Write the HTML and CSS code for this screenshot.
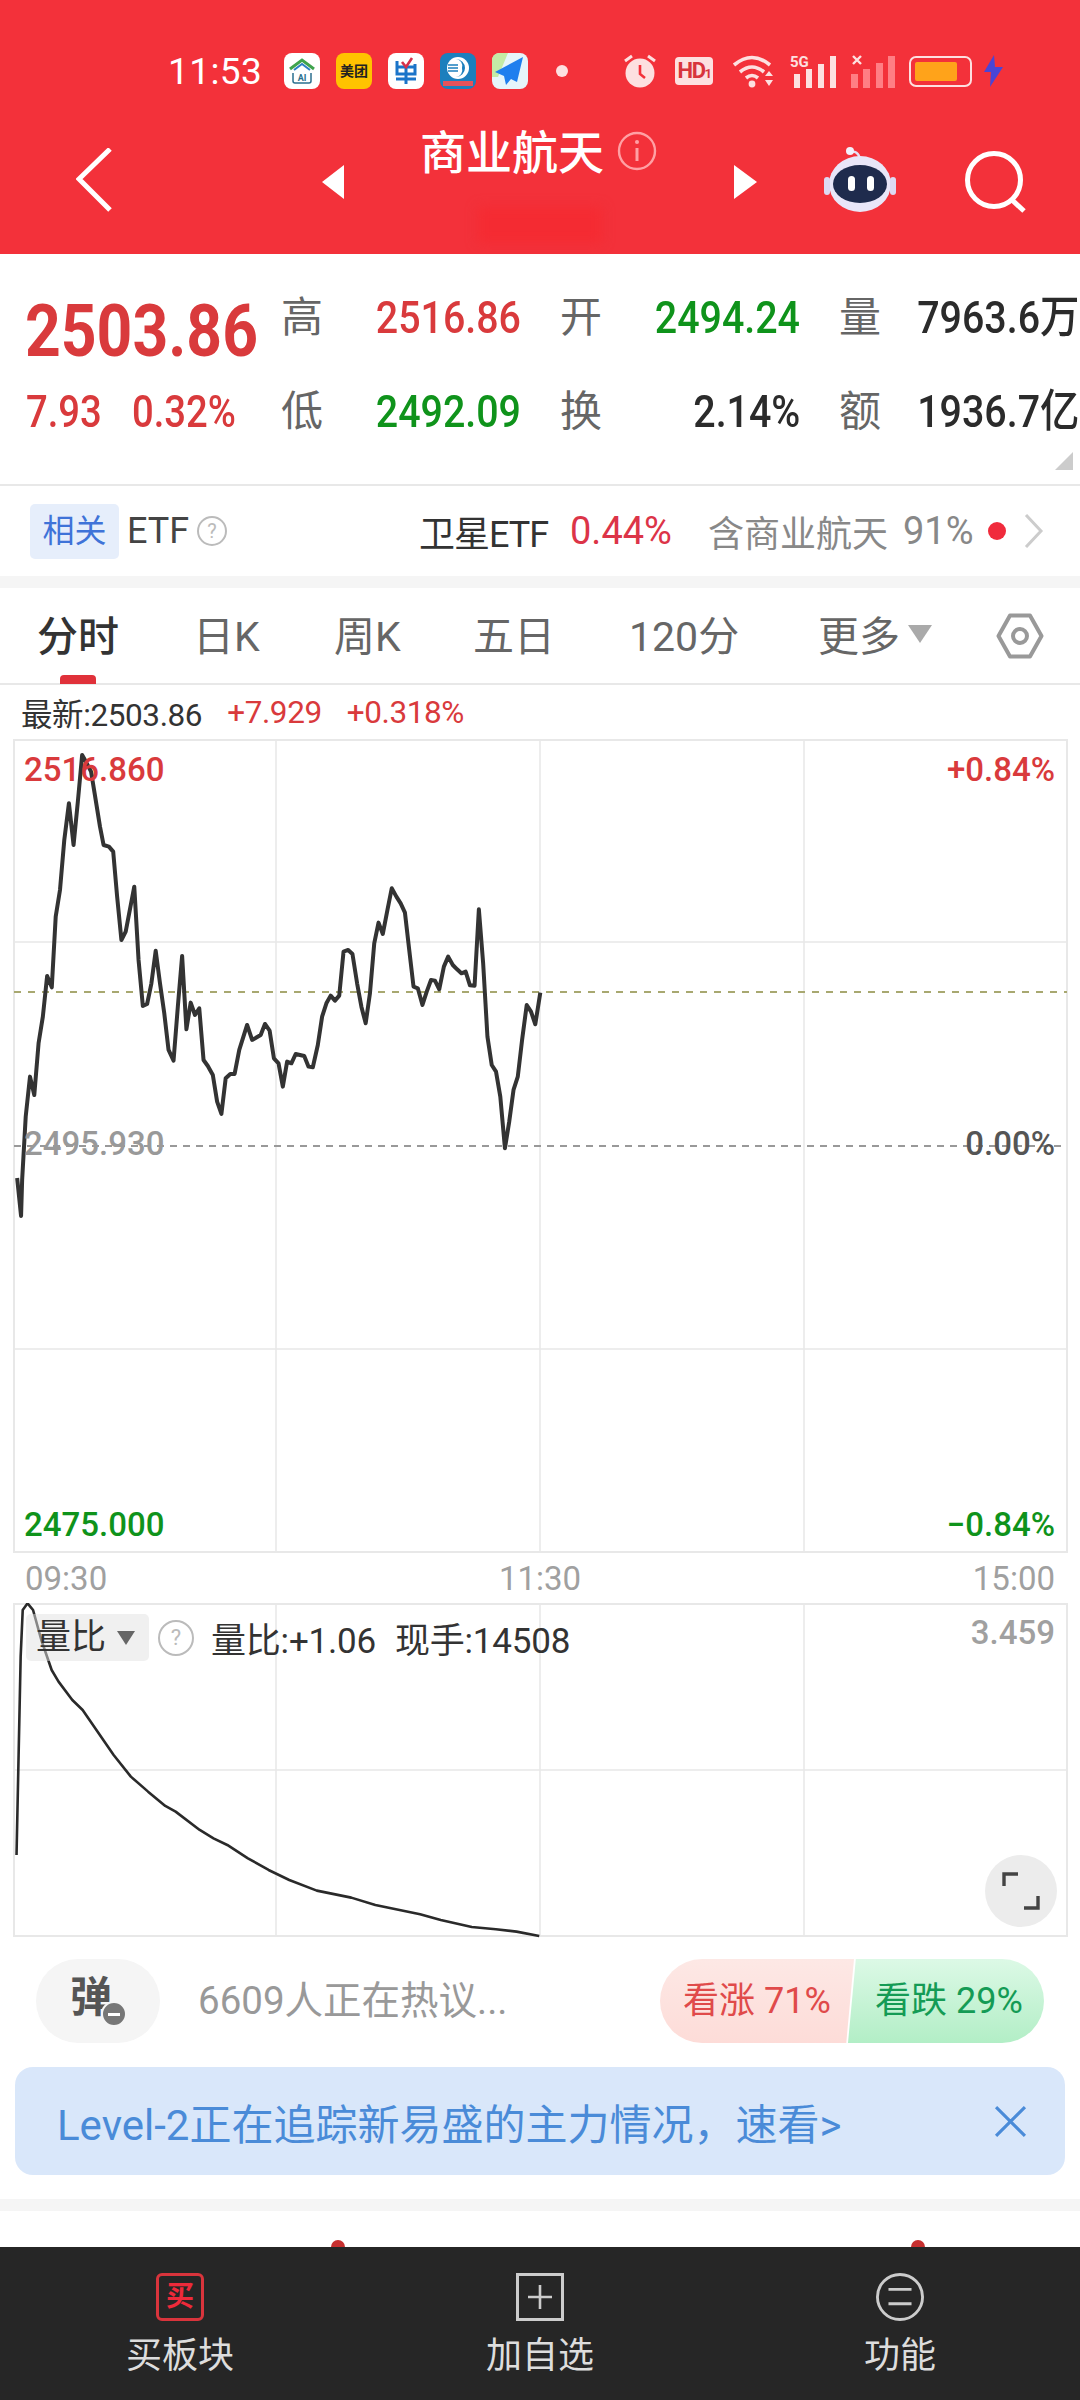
FILE: index.html
```html
<!DOCTYPE html>
<html>
<head>
    <meta charset="utf-8">
    <title>商业航天</title>
    <link rel="stylesheet" href="styles.css">
</head>
<body>
<div class="phone">

    <!-- red header -->
    <header class="top">
        <div class="status">
            <span class="time">11:53</span>
            <svg class="app first" viewBox="0 0 36 36"><rect width="36" height="36" rx="8" fill="#fff"/><path d="M6 16 18 7l12 9" fill="none" stroke="#3fa34d" stroke-width="3"/><path d="M10 17 18 11l8 6" fill="none" stroke="#2b7fc4" stroke-width="2"/><path d="M9 20v8q0 2 2 2h14q2 0 2-2v-8" fill="none" stroke="#2b6f8f" stroke-width="1.5"/><text x="18" y="28" class="app-ai">AI</text></svg>
            <span class="app meituan">美团</span>
            <svg class="app" viewBox="0 0 36 36"><rect width="36" height="36" rx="8" fill="#fff"/><path d="M9 8v13h18V11M9 14h18M18 14v17M8 26h20" fill="none" stroke="#1b74c9" stroke-width="3"/><path d="M14 9l4 5 6-9" fill="none" stroke="#d5304a" stroke-width="2.6"/></svg>
            <svg class="app" viewBox="0 0 36 36"><rect width="36" height="36" rx="8" fill="#1c7fbd"/><circle cx="18" cy="15" r="11" fill="#fff"/><path d="M16 6a9 9 0 0 1 0 18 7 7 0 0 0 6-9 7 7 0 0 0-6-9z" fill="#1c7fbd"/><path d="M8 12h10M8 15h10M8 18h10" stroke="#1c7fbd" stroke-width="1.4"/><rect x="3" y="28" width="30" height="5" fill="#e5525a"/></svg>
            <svg class="app" viewBox="0 0 36 36"><rect width="36" height="36" rx="8" fill="#e6f5fb"/><path d="M0 8q0-8 8-8h8L6 24H0z" fill="#c4eba6"/><path d="M31 4 3 19l9 4 2 9 5-6 6 3z" fill="#1f7fee"/></svg>
            <span class="dot"></span>
            <svg class="alarm" viewBox="0 0 36 36"><circle cx="18" cy="20" r="14.5" fill="#fde0e0"/><path d="M18 12v9l5 4" fill="none" stroke="#f3313a" stroke-width="2.6"/><path d="M3 8l7-5M33 8l-7-5" stroke="#fde0e0" stroke-width="3"/></svg>
            <span class="hd">HD<small>1</small></span>
            <svg class="wifi" viewBox="0 0 43 34"><path d="M2 11Q20-4 38 11M8 18q12-10 24 0M14 24q6-5 12 0" fill="none" stroke="#fde0e0" stroke-width="3.6"/><circle cx="20" cy="30" r="3.4" fill="#fde0e0"/><path d="M33 22l4-5 4 5zM33 26l4 6 4-6z" fill="#fde0e0"/></svg>
            <svg class="sig" viewBox="0 0 46 34"><text x="0" y="13" class="sig-5g">5G</text><rect x="4" y="20" width="6" height="14" fill="#fde0e0"/><rect x="16" y="15" width="6" height="19" fill="#fde0e0"/><rect x="28" y="10" width="6" height="24" fill="#fde0e0"/><rect x="40" y="2" width="6" height="32" fill="#fde0e0"/></svg>
            <svg class="sig two" viewBox="0 0 44 34"><path d="M2 2l8 8M10 2l-8 8" stroke="#fde0e0" stroke-width="2.4"/><g fill="#ff7e84"><rect y="20" width="7" height="14"/><rect x="12" y="15" width="7" height="19"/><rect x="25" y="9" width="7" height="25"/><rect x="37" y="2" width="7" height="32"/></g></svg>
            <span class="battery"><i></i></span>
            <svg class="bolt" viewBox="0 0 19 32"><path d="M10 0 0 17h7l-1 15 13-20h-8z" fill="#4a45d6"/></svg>
        </div>
        <div class="navbar">
            <svg class="back" viewBox="0 0 38 64"><path d="M34 1 3 31l31 31" fill="none" stroke="#fff" stroke-width="5"/></svg>
            <span class="tri tri-left"></span>
            <h1 class="title">商业航天</h1>
            <svg class="info" viewBox="0 0 40 40"><circle cx="20" cy="20" r="18" fill="none" stroke="#ffa0a4" stroke-width="2.4"/><path d="M20 17v13" stroke="#ffa0a4" stroke-width="3"/><circle cx="20" cy="11" r="2" fill="#ffa0a4"/></svg>
            <span class="tri tri-right"></span>
            <svg class="robot" viewBox="0 0 72 66"><path d="M26 5q8-2 10 7" fill="none" stroke="#e4e0f5" stroke-width="2.4"/><circle cx="26" cy="4" r="4" fill="#f3f0fb"/><ellipse cx="36" cy="37" rx="31" ry="28" fill="#e9e6f8"/><rect y="30" width="6" height="18" rx="3" fill="#ddd9f2"/><rect x="66" y="30" width="6" height="18" rx="3" fill="#ddd9f2"/><ellipse cx="36" cy="37" rx="27" ry="19" fill="#1f2b4d"/><rect x="24" y="29" width="7" height="15" rx="3.5" fill="#fff"/><rect x="43" y="29" width="7" height="15" rx="3.5" fill="#fff"/></svg>
            <svg class="search" viewBox="0 0 62 62"><circle cx="29" cy="29" r="26.5" fill="none" stroke="#fff" stroke-width="5"/><path d="M47 49l12 11" stroke="#fff" stroke-width="5"/></svg>
            <div class="smudge"></div>
        </div>
    </header>

    <!-- price block -->
    <section class="quote">
        <div class="q-row">
            <div class="q-main"><span class="price up">2503.86</span></div>
            <div class="pair"><span class="lbl">高</span><span class="val up">2516.86</span></div>
            <div class="pair"><span class="lbl">开</span><span class="val down">2494.24</span></div>
            <div class="pair"><span class="lbl">量</span><span class="val">7963.6万</span></div>
        </div>
        <div class="q-row">
            <div class="q-main change up"><span>7.93</span><span>0.32%</span></div>
            <div class="pair"><span class="lbl">低</span><span class="val down">2492.09</span></div>
            <div class="pair"><span class="lbl">换</span><span class="val">2.14%</span></div>
            <div class="pair"><span class="lbl">额</span><span class="val">1936.7亿</span></div>
        </div>
        <span class="corner"></span>
    </section>

    <section class="etf">
        <span class="tag">相关</span>
        <span class="etf-name">ETF</span>
        <span class="help etf-help">?</span>
        <span class="etf-fund">卫星ETF</span>
        <span class="etf-pct">0.44%</span>
        <span class="etf-has">含商业航天</span>
        <span class="etf-share">91%</span>
        <span class="etf-dot"></span>
        <svg class="etf-more" viewBox="0 0 20 34"><path d="M2 1l15 16L2 33" fill="none" stroke="#ccc" stroke-width="3"/></svg>
    </section>

    <div class="gap"></div>

    <nav class="tabs">
        <span class="tab active">分时</span>
        <span class="tab">日K</span>
        <span class="tab">周K</span>
        <span class="tab">五日</span>
        <span class="tab">120分</span>
        <span class="tab more">更多<i class="caret"></i></span>
        <svg class="hex" viewBox="0 0 48 48"><path d="M14 3.500h20l11.500 20.500-11.500 20.500H14L2.500 24z" fill="none" stroke="#999" stroke-width="4" stroke-linejoin="round"/><circle cx="24" cy="24" r="7" fill="none" stroke="#999" stroke-width="4"/></svg>
    </nav>

    <div class="latest">
        <span class="latest-now">最新:2503.86</span>
        <span class="up">+7.929</span>
        <span class="up">+0.318%</span>
    </div>

    <!-- main chart -->
    <div class="chart">
        <svg class="plot" width="1080" height="814" viewBox="0 739 1080 814">
            <rect x="14" y="740" width="1053" height="812" class="grid-box"/>
            <path d="M276 739V1553M540 739V1553M804 739V1553M14 942H1067M14 1349H1067" class="grid"/>
            <path d="M14 992H1067" class="dash-avg"/>
            <path d="M14 1146H1067" class="dash-base"/>
            <g transform="translate(0 730) scale(.3571 .3333)">
                <polyline class="line" points="48,1344 59,1458 62,1350 72,1160 84,1040 96,1095 108,940 120,860 132,738 145,772 156,560 168,480 180,330 193,220 206,345 218,215 230,75 243,100 255,125 265,190 280,290 290,345 305,350 317,365 328,500 340,630 352,605 376,470 388,690 400,828 412,822 424,760 436,662 448,760 460,850 472,960 486,992 498,830 510,678 522,898 534,818 546,855 558,835 570,990 582,1008 596,1035 608,1115 620,1152 632,1045 645,1032 657,1032 670,960 692,885 706,930 730,915 742,882 755,902 767,985 780,1000 792,1070 804,995 816,1000 828,972 852,978 864,1010 876,1012 890,945 902,860 914,820 926,797 938,812 950,797 962,665 975,660 987,672 1000,760 1012,830 1024,880 1036,790 1048,640 1060,578 1072,612 1085,540 1097,475 1110,500 1122,520 1134,548 1146,660 1158,770 1170,775 1183,825 1195,785 1207,750 1218,752 1230,778 1243,710 1255,680 1268,705 1280,718 1292,730 1304,725 1316,766 1329,767 1341,538 1353,700 1365,920 1377,1005 1389,1025 1401,1100 1414,1255 1426,1175 1438,1080 1450,1040 1462,930 1475,825 1487,845 1499,883 1513,788"/>
            </g>
        </svg>
        <span class="c-label l-top up">2516.860</span>
        <span class="c-label r-top up">+0.84%</span>
        <span class="c-label l-mid">2495.930</span>
        <span class="c-label r-mid">0.00%</span>
        <span class="c-label l-bot down">2475.000</span>
        <span class="c-label r-bot down">−0.84%</span>
    </div>

    <div class="axis">
        <span>09:30</span>
        <span>11:30</span>
        <span>15:00</span>
    </div>

    <!-- volume ratio chart -->
    <div class="chart vol">
        <svg class="plot" width="1080" height="335" viewBox="0 1603 1080 335">
            <rect x="14" y="1604" width="1053" height="332" class="grid-box"/>
            <path d="M276 1603V1937M540 1603V1937M804 1603V1937M14 1770H1067" class="grid"/>
            <g transform="translate(0 1500) scale(.6887 .3333)">
                <polyline class="line thin" points="24,1065 30,470 33,330 40,310 48,330 60,420 75,510 85,545 105,600 120,630 140,690 165,765 190,830 215,875 240,918 255,935 290,990 310,1015 330,1035 360,1075 390,1110 420,1140 460,1172 510,1193 545,1215 610,1243 640,1260 685,1281 720,1288 750,1295 783,1308"/>
            </g>
        </svg>
        <div class="vol-head">
            <span class="vol-select">量比<i class="caret dark"></i></span>
            <span class="help vol-help">?</span>
            <span class="vol-text">量比:+1.06</span>
            <span class="vol-text">现手:14508</span>
        </div>
        <span class="c-label vol-max">3.459</span>
        <span class="expand">
            <svg viewBox="0 0 38 38"><path d="M2 14V2h14M36 24v12H22" fill="none" stroke="#444" stroke-width="3.4"/></svg>
        </span>
    </div>

    <div class="talk">
        <span class="danmu">弹<i></i></span>
        <span class="talk-text">6609人正在热议...</span>
        <div class="vote">
            <span class="vote-up">看涨 71%</span>
            <span class="vote-down">看跌 29%</span>
        </div>
    </div>

    <div class="banner">
        <span>Level-2正在追踪新易盛的主力情况，速看&gt;</span>
        <svg class="banner-close" viewBox="0 0 32 32"><path d="M2 2l28 28M30 2 2 30" stroke="#4a8bd8" stroke-width="3"/></svg>
    </div>

    <div class="gap"></div>
    <div class="fill"></div>

    <footer class="bottom">
        <i class="pin pin-a"></i>
        <i class="pin pin-b"></i>
        <div class="b-item">
            <span class="b-icon buy">买</span>
            <span>买板块</span>
        </div>
        <div class="b-item">
            <svg class="b-icon" viewBox="0 0 48 48"><rect x="1.5" y="1.5" width="45" height="45" fill="none" stroke="#ccc" stroke-width="3"/><path d="M24 12v24M12 24h24" stroke="#ccc" stroke-width="2.6"/></svg>
            <span>加自选</span>
        </div>
        <div class="b-item">
            <svg class="b-icon" viewBox="0 0 50 50"><circle cx="25" cy="25" r="23.5" fill="none" stroke="#ccc" stroke-width="3"/><path d="M13 17h24M13 32h24" stroke="#ccc" stroke-width="3"/></svg>
            <span>功能</span>
        </div>
    </footer>
</div>
</body>
</html>
```

FILE: styles.css
```css
* {
    margin: 0;
    padding: 0;
    box-sizing: border-box;
}
body {
    background: #fff;
    font-family: Roboto, "Noto Sans CJK SC", sans-serif;
    color: #333;
}
i {
    font-style: normal;
}
.phone {
    width: 1080px;
    height: 2400px;
    overflow: hidden;
    position: relative;
    display: flex;
    flex-direction: column;
}
.up {
    color: #d93a3c;
}
.down {
    color: #0f931b;
}

/* header */
.top {
    height: 254px;
    background: #f3313a;
    flex: none;
    padding-top: 53px;
}
.status {
    display: flex;
    align-items: center;
    height: 36px;
    padding-left: 168px;
}
.time {
    width: 92px;
    font-size: 37px;
    color: #fff;
    letter-spacing: .4px;
}
.app {
    width: 36px;
    height: 36px;
    margin-left: 16px;
    flex: none;
}
.app.first {
    margin-left: 24px;
}
.app-ai {
    font: 700 9px Roboto, sans-serif;
    fill: #2b6f8f;
    text-anchor: middle;
}
.meituan {
    background: #ffc300;
    border-radius: 8px;
    color: #222;
    font-size: 14px;
    font-weight: 700;
    line-height: 36px;
    text-align: center;
}
.dot {
    width: 12px;
    height: 12px;
    border-radius: 50%;
    background: #fde0e0;
    margin-left: 28px;
}
.alarm {
    width: 36px;
    height: 36px;
    margin-left: 54px;
}
.hd {
    width: 38px;
    height: 28px;
    margin-left: 17px;
    border-radius: 4px;
    background: #fde0e0;
    color: #d8343c;
    font-size: 22px;
    font-weight: 700;
    line-height: 28px;
    text-align: center;
    letter-spacing: -1.5px;
}
.hd small {
    font-size: 13px;
}
.wifi {
    width: 43px;
    height: 34px;
    margin-left: 19px;
}
.sig {
    width: 46px;
    height: 34px;
    margin-left: 15px;
}
.sig.two {
    width: 44px;
}
.sig-5g {
    font: 700 15px Roboto, sans-serif;
    fill: #fde0e0;
}
.battery {
    width: 63px;
    height: 31px;
    margin-left: 14px;
    padding: 4px;
    border: 2px solid #fde0e0;
    border-radius: 7px;
    position: relative;
}
.battery i {
    display: block;
    width: 42px;
    height: 100%;
    background: #ffa31a;
    border-radius: 2px;
}
.bolt {
    width: 19px;
    height: 32px;
    margin-left: 12px;
}
.navbar {
    display: flex;
    align-items: flex-start;
    height: 165px;
    position: relative;
}
.back {
    width: 38px;
    height: 64px;
    margin-left: 76px;
    margin-top: 59px;
}
.tri {
    width: 0;
    height: 0;
    margin-top: 76px;
    border-top: 17px solid transparent;
    border-bottom: 17px solid transparent;
}
.tri-left {
    margin-left: 208px;
    border-right: 22px solid #fff;
}
.tri-right {
    margin-left: 77px;
    border-left: 23px solid #fff;
}
.title {
    margin-left: 76px;
    margin-top: 32px;
    font-size: 46px;
    font-weight: 500;
    line-height: 64px;
    color: #fff;
    white-space: nowrap;
}
.info {
    width: 40px;
    height: 40px;
    margin-left: 13px;
    margin-top: 42px;
}
.robot {
    width: 72px;
    height: 66px;
    margin-left: 67px;
    margin-top: 58px;
}
.search {
    width: 62px;
    height: 62px;
    margin-left: 69px;
    margin-top: 62px;
}
.smudge {
    position: absolute;
    left: 478px;
    top: 118px;
    width: 124px;
    height: 36px;
    background: #f42b32;
    filter: blur(6px);
}

/* quote */
.quote {
    height: 232px;
    padding: 17px 0 0 26px;
    position: relative;
    flex: none;
    border-bottom: 2px solid #e8e8e8;
}
.q-row {
    display: flex;
    height: 94px;
    line-height: 94px;
}
.q-main {
    width: 255px;
    flex: none;
}
.price {
    display: block;
    margin-top: 13px;
    margin-left: -1px;
    font-size: 73px;
    font-weight: 700;
    transform: scaleX(.855);
    transform-origin: left;
    white-space: nowrap;
}
.change {
    display: flex;
    gap: 17px;
    font-size: 45px;
    font-weight: 500;
}
.change span {
    transform: scaleX(.85);
    transform-origin: left;
}
.pair {
    display: flex;
    justify-content: space-between;
    width: 240px;
    margin-right: 39px;
}
.pair:last-child {
    margin-right: 0;
}
.lbl {
    font-size: 42px;
    color: #666;
}
.val {
    font-size: 45px;
    font-weight: 500;
    color: #2b2b2b;
    transform: scaleX(.875);
    transform-origin: right;
    white-space: nowrap;
}
.val.up {
    color: #d93a3c;
}
.val.down {
    color: #0f931b;
}
.corner {
    position: absolute;
    right: 7px;
    bottom: 14px;
    width: 0;
    height: 0;
    border-bottom: 18px solid #ccc;
    border-left: 18px solid transparent;
}

/* etf row */
.etf {
    height: 90px;
    display: flex;
    align-items: center;
    flex: none;
    padding-left: 30px;
    font-size: 36px;
}
.tag {
    width: 89px;
    height: 55px;
    line-height: 55px;
    text-align: center;
    background: #e6eefb;
    border-radius: 5px;
    color: #3f73d8;
    font-size: 32px;
}
.etf-name {
    margin-left: 8px;
    width: 60px;
    color: #444;
}
.help {
    display: inline-block;
    border-radius: 50%;
    border: 2px solid #bbb;
    color: #bbb;
    text-align: center;
}
.etf-help {
    width: 30px;
    height: 30px;
    line-height: 26px;
    font-size: 20px;
    margin-left: 10px;
}
.etf-fund {
    margin-left: 192px;
    width: 132px;
    color: #333;
    letter-spacing: -1px;
    white-space: nowrap;
}
.etf-pct {
    margin-left: 19px;
    width: 100px;
    font-size: 38px;
    color: #dc3448;
}
.etf-has {
    margin-left: 38px;
    width: 180px;
    color: #888;
    white-space: nowrap;
}
.etf-share {
    margin-left: 15px;
    width: 71px;
    font-size: 38px;
    color: #888;
}
.etf-dot {
    width: 18px;
    height: 18px;
    margin-left: 14px;
    border-radius: 50%;
    background: #f02b3c;
}
.etf-more {
    width: 20px;
    height: 34px;
    margin-left: 18px;
}
.gap {
    height: 12px;
    background: #f5f5f5;
    flex: none;
}

/* tabs */
.tabs {
    height: 97px;
    flex: none;
    display: grid;
    grid-template-columns: 156px 141px 139px 156px 189px 150px;
    align-items: center;
    padding: 0 0 6px 37px;
    position: relative;
    font-size: 41px;
    color: #666;
    border-bottom: 2px solid #e8e8e8;
}
.tab {
    white-space: nowrap;
}
.tab.active {
    color: #333;
    font-weight: 500;
}
.tab.active::after {
    content: "";
    position: absolute;
    left: 60px;
    bottom: -1px;
    width: 36px;
    height: 9px;
    border-radius: 4px 4px 0 0;
    background: #e0313a;
}
.more {
    display: flex;
    align-items: center;
}
.caret {
    display: inline-block;
    width: 0;
    height: 0;
    margin-left: 8px;
    margin-top: 3px;
    border-left: 12px solid transparent;
    border-right: 12px solid transparent;
    border-top: 18px solid #aaa;
}
.hex {
    position: absolute;
    left: 996px;
    top: 24px;
    width: 48px;
    height: 48px;
}
.latest {
    height: 54px;
    flex: none;
    display: flex;
    align-items: center;
    gap: 25px;
    padding-left: 21px;
    font-size: 31.5px;
    letter-spacing: -.4px;
}
.latest-now {
    color: #333;
}

/* charts */
.chart {
    position: relative;
    height: 814px;
    flex: none;
}
.plot {
    display: block;
}
.grid-box {
    fill: none;
    stroke: #e8e8e8;
    stroke-width: 2;
}
.grid {
    fill: none;
    stroke: #e8e8e8;
    stroke-width: 1.5;
}
.dash-avg {
    stroke: #a8a870;
    stroke-width: 2;
    stroke-dasharray: 7 7;
}
.dash-base {
    stroke: #999;
    stroke-width: 2;
    stroke-dasharray: 7 6;
}
.line {
    fill: none;
    stroke: #333;
    stroke-width: 4;
    stroke-linejoin: round;
    vector-effect: non-scaling-stroke;
}
.line.thin {
    stroke-width: 2.6;
    stroke: #2a2a2a;
}
.c-label {
    position: absolute;
    font-size: 33px;
    line-height: 40px;
    font-weight: 500;
    white-space: nowrap;
}
.l-top, .l-mid, .l-bot {
    left: 24px;
}
.r-top, .r-mid, .r-bot {
    right: 25px;
}
.l-top, .r-top {
    top: 11px;
}
.l-mid, .r-mid {
    top: 385px;
}
.l-mid {
    color: #999;
}
.r-mid {
    color: #555;
}
.l-bot, .r-bot {
    top: 766px;
}
.axis {
    height: 50px;
    flex: none;
    display: flex;
    justify-content: space-between;
    align-items: center;
    padding: 0 25px;
    font-size: 33px;
    color: #a0a0a0;
}
.chart.vol {
    height: 335px;
}
.vol-head {
    position: absolute;
    left: 26px;
    top: 11px;
    display: flex;
    align-items: center;
    height: 47px;
    font-size: 35px;
    color: #333;
}
.vol-select {
    width: 123px;
    height: 47px;
    line-height: 47px;
    padding-left: 10px;
    background: rgba(225, 225, 225, .5);
    border-radius: 5px;
    display: flex;
    align-items: center;
}
.caret.dark {
    margin-left: 11px;
    margin-top: 0;
    border-left-width: 9px;
    border-right-width: 9px;
    border-top: 14px solid #666;
}
.vol-help {
    width: 36px;
    height: 36px;
    line-height: 32px;
    font-size: 22px;
    margin-left: 9px;
    flex: none;
}
.vol-text {
    margin-left: 19px;
    white-space: nowrap;
    letter-spacing: -.2px;
}
.vol-help + .vol-text {
    margin-left: 17px;
}
.vol-max {
    right: 25px;
    top: 10px;
    color: #a0a0a0;
}
.expand {
    position: absolute;
    left: 985px;
    top: 252px;
    width: 72px;
    height: 72px;
    border-radius: 50%;
    background: #ececec;
    display: flex;
    align-items: center;
    justify-content: center;
}
.expand svg {
    width: 38px;
    height: 38px;
}

/* discussion row */
.talk {
    height: 129px;
    flex: none;
    display: flex;
    align-items: flex-start;
    padding: 21px 0 0 36px;
}
.danmu {
    width: 124px;
    height: 84px;
    border-radius: 42px;
    background: #f5f5f5;
    position: relative;
    font-size: 42px;
    font-weight: 700;
    line-height: 78px;
    color: #555;
    padding-left: 34px;
}
.danmu i {
    position: absolute;
    left: 65px;
    top: 42px;
    width: 22px;
    height: 22px;
    border-radius: 50%;
    background: #777;
    border: 2px solid #f5f5f5;
    box-sizing: content-box;
}
.danmu i::after {
    content: "";
    position: absolute;
    left: 5px;
    top: 10px;
    width: 12px;
    height: 3px;
    background: #fff;
}
.talk-text {
    margin-left: 38px;
    font-size: 38.5px;
    line-height: 84px;
    color: #999;
    width: 462px;
    white-space: nowrap;
}
.vote {
    display: flex;
    width: 384px;
    height: 84px;
    font-size: 36px;
    line-height: 84px;
}
.vote-up, .vote-down {
    display: block;
    white-space: nowrap;
}
.vote-up {
    width: 194px;
    padding-left: 23px;
    border-radius: 42px 0 0 42px;
    background: linear-gradient(#fde8e5, #fddcd8);
    color: #e04a4a;
    clip-path: polygon(0 0, 100% 0, 96% 100%, 0 100%);
}
.vote-down {
    width: 196px;
    margin-left: -6px;
    padding-left: 27px;
    border-radius: 0 42px 42px 0;
    background: linear-gradient(#dcf9e6, #b2eec6);
    color: #149b55;
    clip-path: polygon(4% 0, 100% 0, 100% 100%, 0 100%);
}

/* banner */
.banner {
    height: 108px;
    margin: 0 15px;
    flex: none;
    display: flex;
    align-items: center;
    justify-content: space-between;
    padding: 0 38px 0 42px;
    border-radius: 18px;
    background: #d9e7fa;
    color: #4a8bd8;
    font-size: 42px;
    white-space: nowrap;
}
.banner-close {
    width: 33px;
    height: 33px;
}
.banner + .gap {
    margin-top: 24px;
}
.fill {
    flex: 1;
}

/* bottom bar */
.bottom {
    height: 153px;
    flex: none;
    background: #262626;
    position: relative;
    display: flex;
    font-size: 36px;
    color: #ddd;
}
.pin {
    position: absolute;
    top: -7px;
    width: 14px;
    height: 7px;
    border-radius: 7px 7px 0 0;
    background: #c62f2f;
}
.pin-a {
    left: 331px;
}
.pin-b {
    left: 911px;
}
.b-item {
    width: 360px;
    display: flex;
    flex-direction: column;
    align-items: center;
    padding-top: 26px;
    gap: 5px;
}
.b-icon {
    width: 48px;
    height: 48px;
}
.b-icon.buy {
    border: 3px solid #d9343c;
    border-radius: 6px;
    color: #ee2a3a;
    font-size: 28px;
    font-weight: 700;
    line-height: 42px;
    text-align: center;
}
```
